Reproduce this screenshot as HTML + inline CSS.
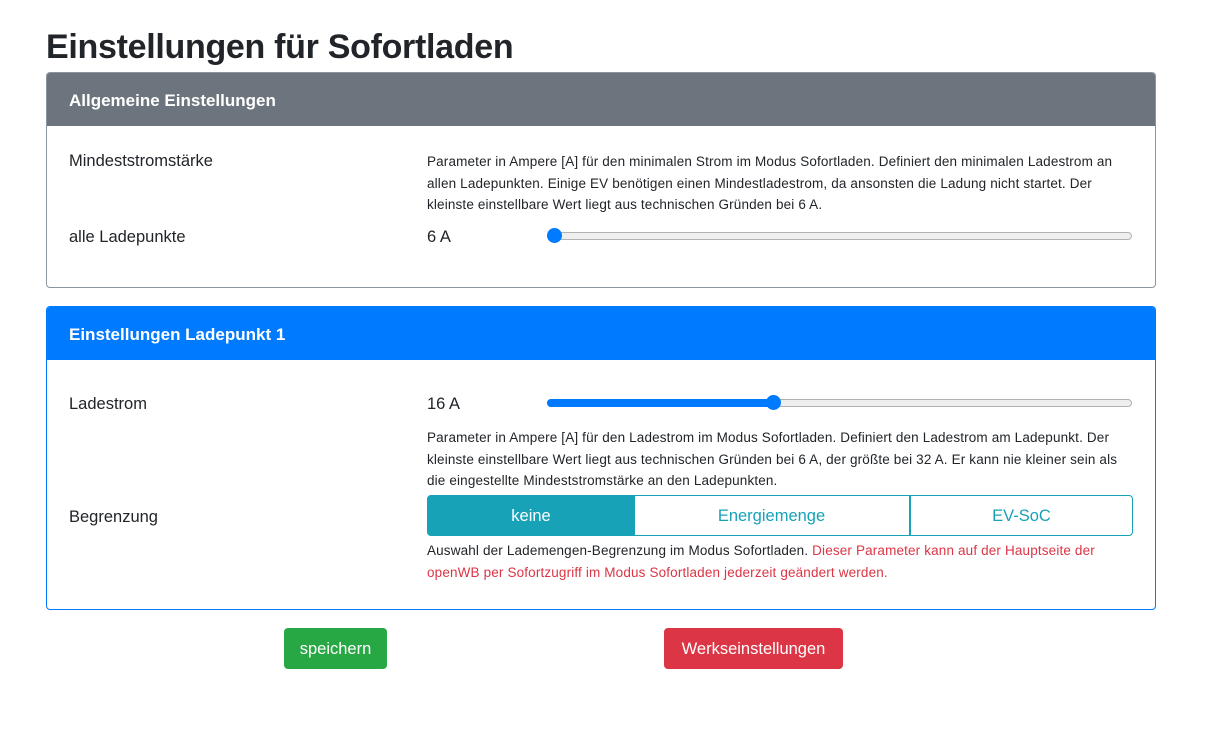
<!DOCTYPE html>
<html><head><meta charset="utf-8"><style>
body{margin:0;background:#fff;font-family:"Liberation Sans",sans-serif;color:#212529;width:1213px;height:734px;position:relative;overflow:hidden}
.a{position:absolute;white-space:nowrap}
h1{position:absolute;left:46px;top:25px;margin:0;font-size:34px;font-weight:bold;line-height:44px;letter-spacing:-0.3px}
.card{position:absolute;left:46px;width:1108px;border:1px solid #8c959d;border-radius:4px;overflow:hidden}
.hd{height:53px;color:#fff;font-weight:bold;font-size:17px;line-height:55px;padding-left:22px}
.lab{font-size:16.5px}
.sm{position:absolute;left:427px;font-size:13.5px;letter-spacing:0.15px;line-height:21.5px;white-space:nowrap}
.track{position:absolute;left:547px;width:583px;height:6px;background:#efefef;border:1px solid #b2b2b2;border-radius:4px}
.fill{position:absolute;left:547px;height:8px;background:#007bff;border-radius:4px}
.thumb{position:absolute;width:15px;height:15px;border-radius:50%;background:#007bff}
.bg{position:absolute;top:495px;height:39px;border:1px solid #17a2b8;color:#17a2b8;font-size:16.5px;line-height:41px;text-align:center;box-sizing:content-box}
.btn{position:absolute;top:628px;height:41px;line-height:42px;color:#fff;font-size:16.5px;text-align:center;border-radius:4px}
</style></head><body>
<h1>Einstellungen für Sofortladen</h1>
<div class="card" style="top:72px;height:214px;"><div class="hd" style="background:#6c757d">Allgemeine Einstellungen</div></div>
<div class="a lab" style="left:69px;top:152px">Mindeststromstärke</div>
<div class="sm" style="top:151px">Parameter in Ampere [A] für den minimalen Strom im Modus Sofortladen. Definiert den minimalen Ladestrom an<br>allen Ladepunkten. Einige EV benötigen einen Mindestladestrom, da ansonsten die Ladung nicht startet. Der<br>kleinste einstellbare Wert liegt aus technischen Gründen bei 6 A.</div>
<div class="a lab" style="left:69px;top:228px">alle Ladepunkte</div>
<div class="a lab" style="left:427px;top:228px">6 A</div>
<div class="track" style="top:232px"></div>
<div class="thumb" style="left:547px;top:228px"></div>

<div class="card" style="top:306px;height:302px;border-color:#007bff"><div class="hd" style="background:#007bff">Einstellungen Ladepunkt 1</div></div>
<div class="a lab" style="left:69px;top:395px">Ladestrom</div>
<div class="a lab" style="left:427px;top:395px">16 A</div>
<div class="track" style="top:399px"></div>
<div class="fill" style="top:399px;width:230px"></div>
<div class="thumb" style="left:766px;top:395px"></div>
<div class="sm" style="top:427px">Parameter in Ampere [A] für den Ladestrom im Modus Sofortladen. Definiert den Ladestrom am Ladepunkt. Der<br>kleinste einstellbare Wert liegt aus technischen Gründen bei 6 A, der größte bei 32 A. Er kann nie kleiner sein als<br>die eingestellte Mindeststromstärke an den Ladepunkten.</div>
<div class="a lab" style="left:69px;top:508px">Begrenzung</div>
<div class="bg" style="left:427px;width:206px;background:#17a2b8;color:#fff;border-radius:4px 0 0 4px">keine</div>
<div class="bg" style="left:634px;width:275px;border-left:none">Energiemenge</div>
<div class="bg" style="left:910px;width:221px;border-radius:0 4px 4px 0">EV-SoC</div>
<div class="sm" style="top:540px">Auswahl der Lademengen-Begrenzung im Modus Sofortladen. <span style="color:#dc3545">Dieser Parameter kann auf der Hauptseite der<br>openWB per Sofortzugriff im Modus Sofortladen jederzeit geändert werden.</span></div>
<div class="btn" style="left:284px;width:103px;background:#28a745">speichern</div>
<div class="btn" style="left:664px;width:179px;background:#dc3545">Werkseinstellungen</div>
</body></html>
